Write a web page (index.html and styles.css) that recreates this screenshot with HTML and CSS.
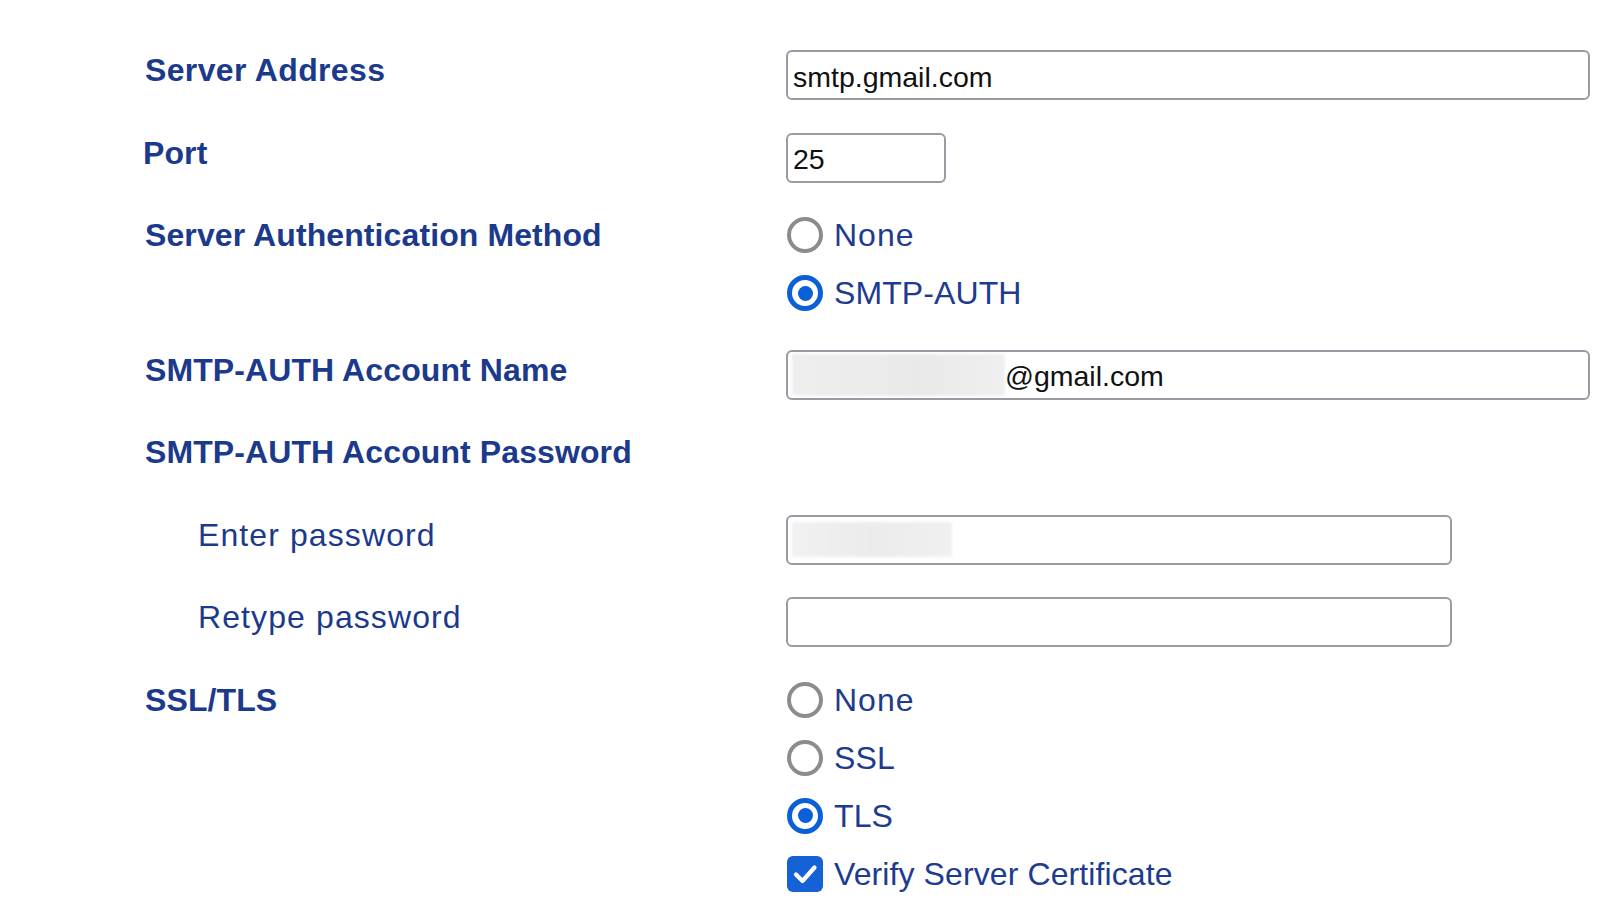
FILE: index.html
```html
<!DOCTYPE html>
<html lang="en">
<head>
<meta charset="utf-8">
<title>SMTP Settings</title>
<link rel="stylesheet" href="styles.css">
</head>
<body>
<div class="form">
  <div class="row">
    <div class="label addr">Server Address</div>
    <div class="control"><div class="field wide"><span class="value">smtp.gmail.com</span></div></div>
  </div>
  <div class="row">
    <div class="label port">Port</div>
    <div class="control"><div class="field short"><span class="value">25</span></div></div>
  </div>
  <div class="row">
    <div class="label">Server Authentication Method</div>
    <div class="control options">
      <div class="option"><span class="radio"></span><span class="opt-text wide-text">None</span></div>
      <div class="option"><span class="radio checked"></span><span class="opt-text">SMTP-AUTH</span></div>
    </div>
  </div>
  <div class="row">
    <div class="label">SMTP-AUTH Account Name</div>
    <div class="control"><div class="field wide"><span class="blur name-blur"></span><span class="value">@gmail.com</span></div></div>
  </div>
  <div class="row">
    <div class="label">SMTP-AUTH Account Password</div>
    <div class="control"></div>
  </div>
  <div class="row">
    <div class="label sub">Enter password</div>
    <div class="control"><div class="field medium"><span class="blur pw-blur"></span></div></div>
  </div>
  <div class="row">
    <div class="label sub">Retype password</div>
    <div class="control"><div class="field medium"></div></div>
  </div>
  <div class="row">
    <div class="label">SSL/TLS</div>
    <div class="control options">
      <div class="option"><span class="radio"></span><span class="opt-text wide-text">None</span></div>
      <div class="option"><span class="radio"></span><span class="opt-text">SSL</span></div>
      <div class="option"><span class="radio checked"></span><span class="opt-text">TLS</span></div>
      <div class="option"><span class="checkbox"><svg viewBox="0 0 36 36" width="36" height="36"><path d="M9 18.5 L15.5 25 L27.5 11.5" fill="none" stroke="#fff" stroke-width="4.2" stroke-linecap="round" stroke-linejoin="round"/></svg></span><span class="opt-text">Verify Server Certificate</span></div>
    </div>
  </div>
</div>
</body>
</html>
```
FILE: styles.css
```css
html, body {
  margin: 0;
  padding: 0;
  background: #ffffff;
}
body {
  font-family: "Liberation Sans", Arial, sans-serif;
  width: 1600px;
  height: 900px;
  overflow: hidden;
}
.form {
  display: flex;
  flex-direction: column;
  gap: 32.5px;
  padding: 50px 0 0 145px;
}
.row {
  display: grid;
  grid-template-columns: 641px 1fr;
  min-height: 50px;
}
.label {
  font-size: 32px;
  font-weight: bold;
  line-height: 40px;
  height: 40px;
  color: #1c3a8c;
  white-space: nowrap;
  letter-spacing: 0.1px;
}
.label.addr {
  letter-spacing: 0.35px;
}
.label.port {
  margin-left: -2px;
}
.label.sub {
  font-weight: normal;
  padding-left: 53px;
  letter-spacing: 1.1px;
}
.control {
  min-width: 0;
}
.field {
  box-sizing: border-box;
  height: 50px;
  border: 2px solid #9a9aa2;
  border-radius: 6px;
  background: #fff;
  display: flex;
  align-items: center;
  padding-left: 5px;
  overflow: hidden;
}
.field.wide {
  width: 804px;
}
.field.short {
  width: 160px;
}
.field.medium {
  width: 666px;
}
.value {
  font-size: 28.5px;
  color: #111111;
  line-height: 1;
  padding-top: 4px;
}
.blur {
  display: inline-block;
  border-radius: 2px;
  filter: blur(1.5px);
}
.name-blur {
  width: 213px;
  height: 42px;
  margin-left: -1px;
  background: linear-gradient(90deg, #eeeeee 0%, #e9e9e9 60%, #efefef 100%);
}
.pw-blur {
  width: 160px;
  height: 35px;
  margin-left: -1px;
  background: linear-gradient(90deg, #f1f1f1 0%, #ebebeb 50%, #f0f0f0 100%);
}
.options {
  display: flex;
  flex-direction: column;
  gap: 18px;
  padding-bottom: 4px;
}
.option {
  display: flex;
  align-items: center;
  height: 40px;
  padding-left: 1px;
}
.radio {
  box-sizing: border-box;
  width: 36px;
  height: 36px;
  border-radius: 50%;
  border: 4px solid #8c8c8c;
  background: #fff;
  flex: none;
  position: relative;
}
.radio.checked {
  border: 5px solid #0b60d8;
}
.radio.checked::after {
  content: "";
  position: absolute;
  left: 50%;
  top: 50%;
  width: 15px;
  height: 15px;
  margin: -7.5px 0 0 -7.5px;
  border-radius: 50%;
  background: #0b60d8;
}
.checkbox {
  width: 36px;
  height: 36px;
  border-radius: 6px;
  background: #1462d6;
  flex: none;
  display: block;
}
.checkbox svg {
  display: block;
}
.opt-text {
  margin-left: 11px;
  font-size: 32px;
  line-height: 40px;
  color: #1d3b8f;
  white-space: nowrap;
  letter-spacing: 0.1px;
}
.opt-text.wide-text {
  letter-spacing: 1px;
}
```
